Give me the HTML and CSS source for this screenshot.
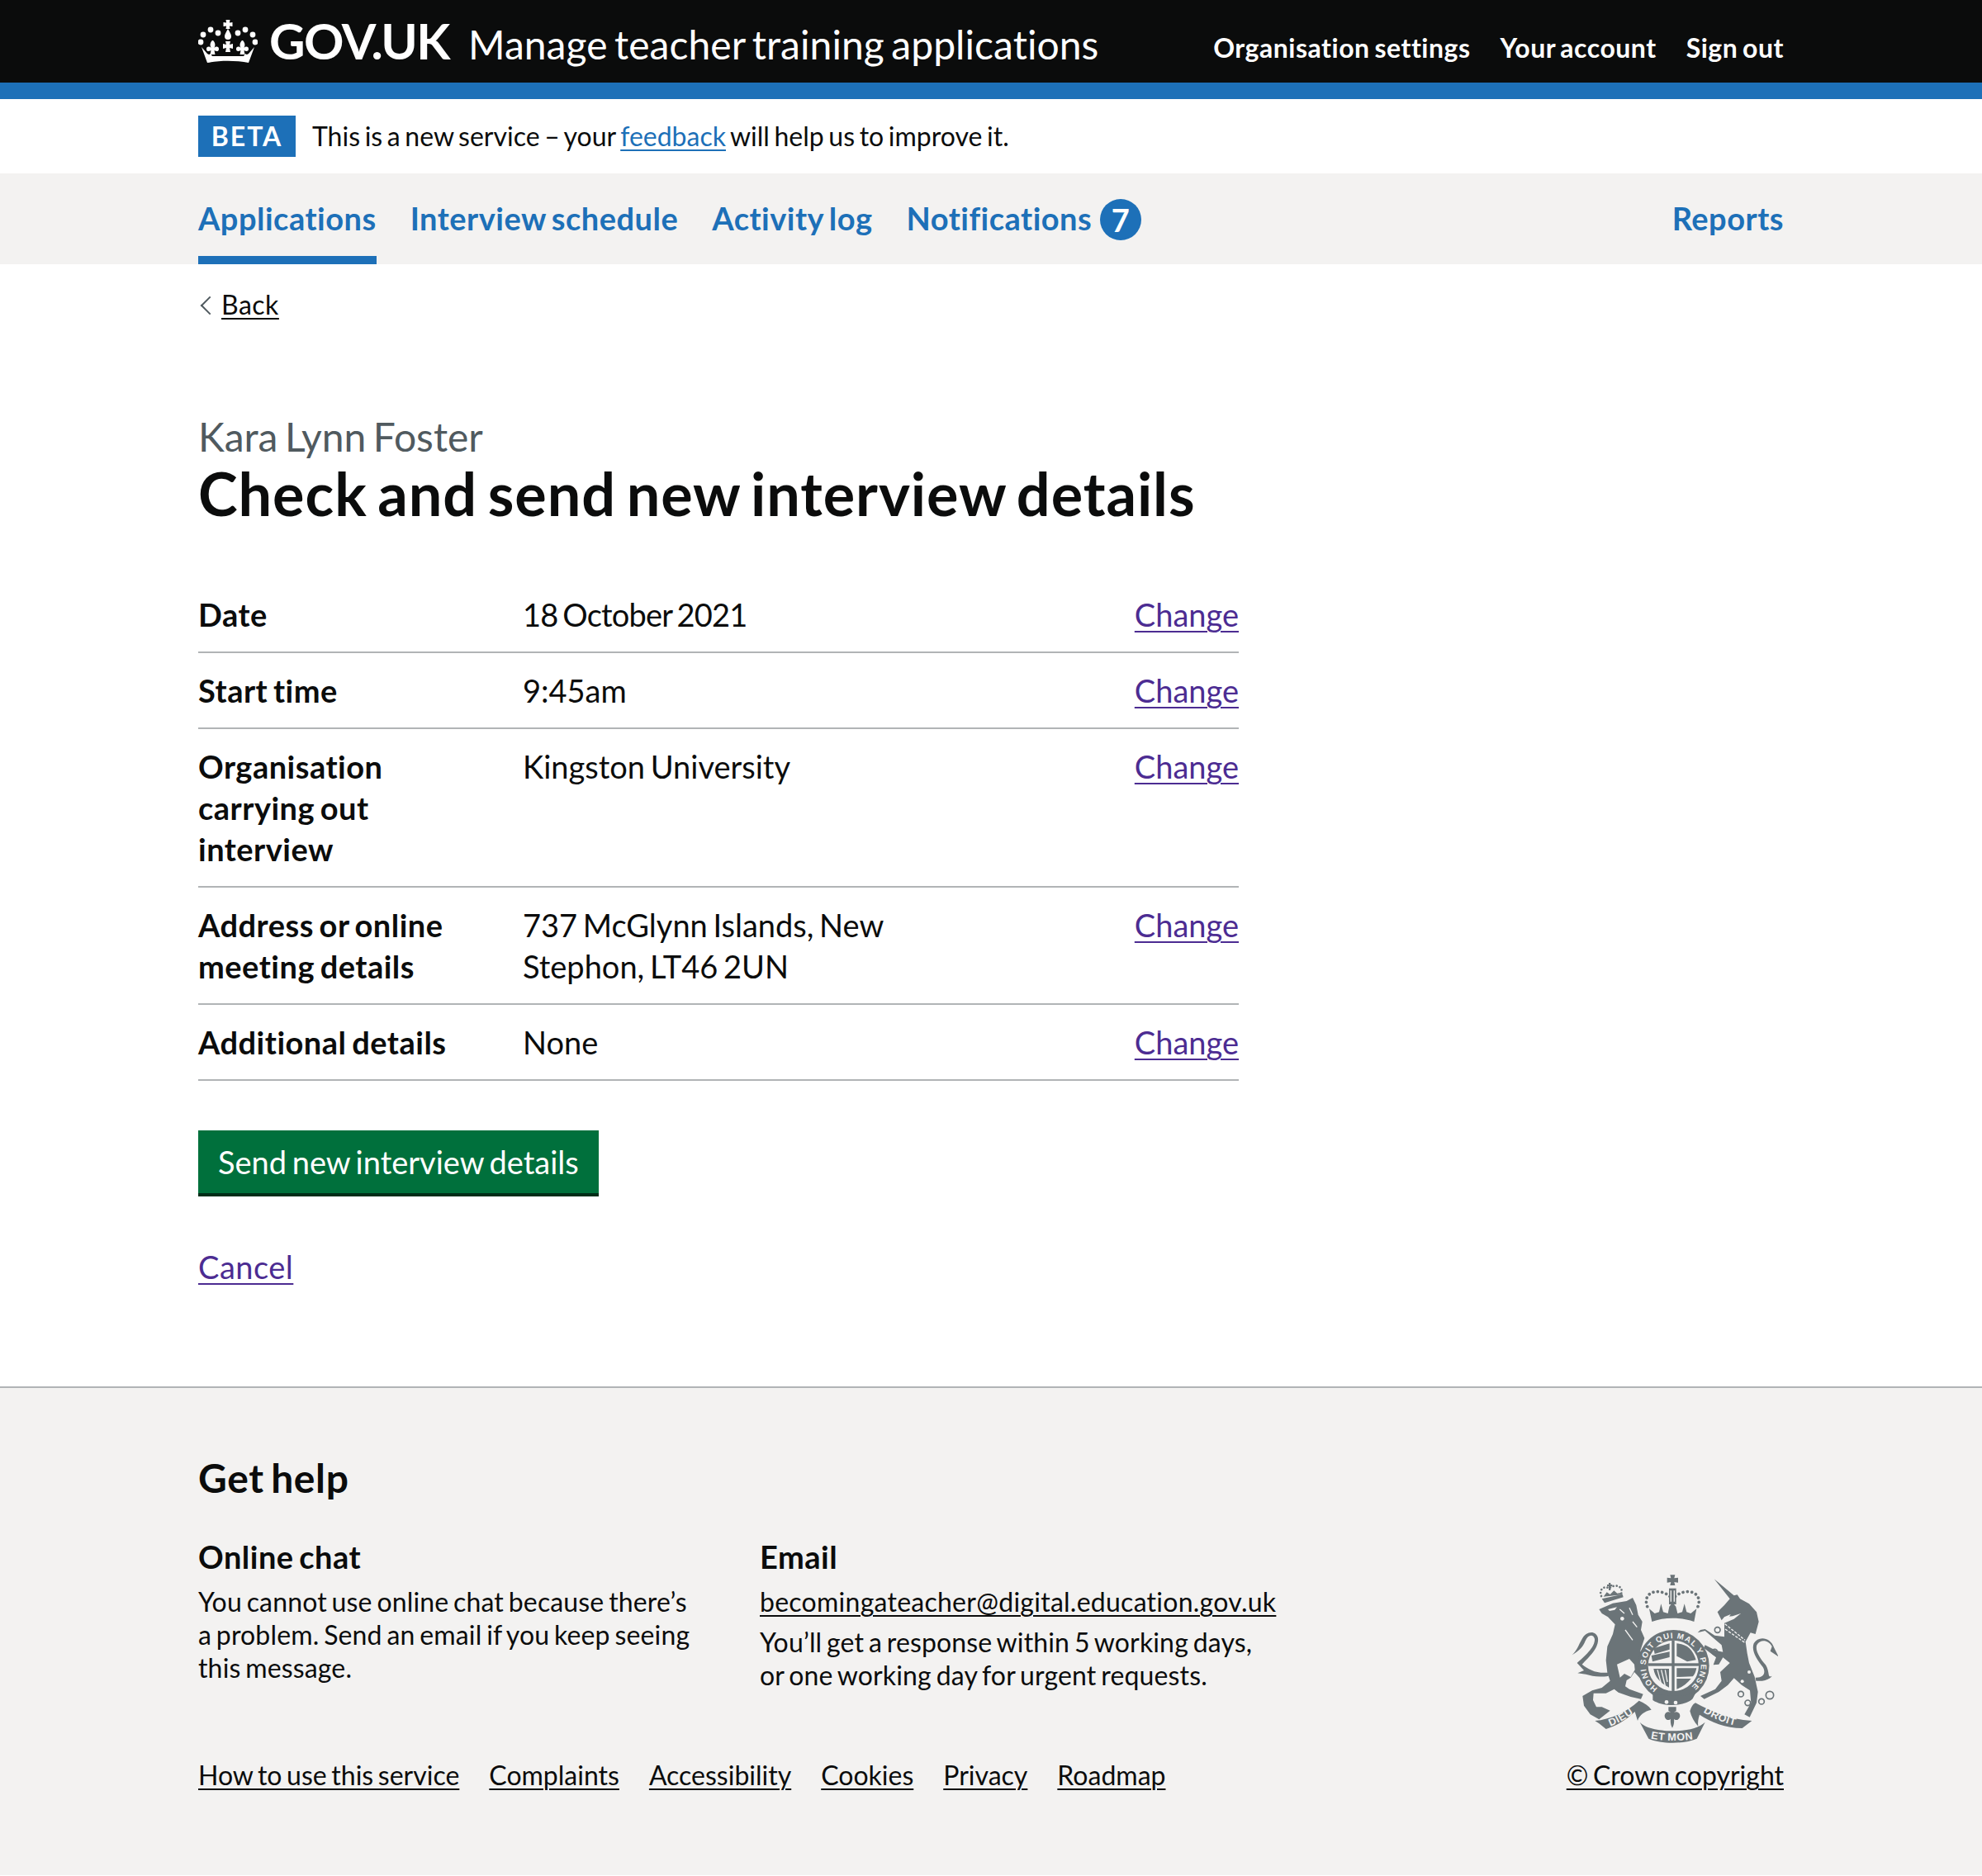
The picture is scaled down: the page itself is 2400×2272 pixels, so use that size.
FILE: index.html
```html
<!DOCTYPE html>
<html>
<head>
  <title>Check and send new interview details</title>
  <link rel="stylesheet" href="styles.css">
</head>
<body>
  <header class="header">
    <div class="width-container header-inner">
      <div class="header-brand">
        <svg class="crown" viewBox="0 0 72 52" aria-hidden="true">
          <defs>
            <path id="fleur" d="M0-12c2 2 3.500 5 1.500 9 2-2 5-2 5.500 1 .3 2-1.500 3.500-3 3l-2.500-1 1 5h-6l1-5-2.500 1c-1.500.5-3.300-1-3-3 .5-3 3.500-3 5.500-1-2-4-.5-7 1.500-9z"/>
          </defs>
          <g fill="#fff">
            <path d="M33.500 0h5l-.6 3.500 3.600-.6v5.200l-3.600-.6.600 3.500h-5l.6-3.500-3.600.6V2.900l3.600.6z"/>
            <path d="M36 11c2 3.500 4 6.500 4 9a4 4 0 0 1-8 0c0-2.500 2-5.500 4-9z"/>
            <circle cx="24" cy="16" r="3.400"/><circle cx="48" cy="16" r="3.400"/>
            <circle cx="15" cy="12" r="3.400"/><circle cx="57" cy="12" r="3.400"/>
            <circle cx="6" cy="18" r="3.400"/><circle cx="66" cy="18" r="3.400"/>
            <circle cx="3" cy="27" r="3.400"/><circle cx="69" cy="27" r="3.400"/>
            <use href="#fleur" x="18" y="37"/>
            <use href="#fleur" x="54" y="37"/>
            <path d="M33 26h6l-1 4 4-1v6l-4-1 1 5h-6l1-5-4 1v-6l4 1z"/>
            <path d="M4 33l7 8c2 1.500 3 1 4 0l2 3h38l2-3c1 1 2 1.500 4 0l7-8-7 19c-15-3-35-3-50 0z"/>
          </g>
        </svg>
        <span class="govuk">GOV.UK</span>
        <span class="service-name">Manage teacher training applications</span>
      </div>
      <nav class="header-links">
        <a href="#">Organisation settings</a>
        <a href="#">Your account</a>
        <a href="#">Sign out</a>
      </nav>
    </div>
  </header>

  <div class="width-container phase-banner">
    <strong class="tag">BETA</strong>
    <span>This is a new service – your <a class="link-blue" href="#">feedback</a> will help us to improve it.</span>
  </div>

  <nav class="primary-nav">
    <div class="width-container primary-nav-inner">
      <a class="nav-item nav-current" href="#">Applications</a>
      <a class="nav-item" href="#">Interview schedule</a>
      <a class="nav-item" href="#">Activity log</a>
      <a class="nav-item" href="#">Notifications <span class="count">7</span></a>
      <a class="nav-item nav-right" href="#">Reports</a>
    </div>
  </nav>

  <main class="width-container">
    <a class="back-link" href="#">Back</a>
    <span class="caption">Kara Lynn Foster</span>
    <h1 class="heading">Check and send new interview details</h1>

    <dl class="summary">
      <div class="summary-row">
        <dt>Date</dt>
        <dd class="summary-date">18 October 2021</dd>
        <dd class="summary-action"><a class="link-visited" href="#">Change</a></dd>
      </div>
      <div class="summary-row">
        <dt>Start time</dt>
        <dd>9:45am</dd>
        <dd class="summary-action"><a class="link-visited" href="#">Change</a></dd>
      </div>
      <div class="summary-row">
        <dt>Organisation carrying out interview</dt>
        <dd>Kingston University</dd>
        <dd class="summary-action"><a class="link-visited" href="#">Change</a></dd>
      </div>
      <div class="summary-row">
        <dt>Address or online meeting details</dt>
        <dd>737 McGlynn Islands, New Stephon, LT46 2UN</dd>
        <dd class="summary-action"><a class="link-visited" href="#">Change</a></dd>
      </div>
      <div class="summary-row">
        <dt>Additional details</dt>
        <dd>None</dd>
        <dd class="summary-action"><a class="link-visited" href="#">Change</a></dd>
      </div>
    </dl>

    <button class="button">Send new interview details</button>
    <p class="cancel"><a class="link-visited" href="#">Cancel</a></p>
  </main>

  <footer class="footer">
    <div class="width-container footer-grid">
      <div class="footer-help">
        <h2 class="footer-heading">Get help</h2>
        <div class="footer-columns">
          <div class="footer-col">
            <h3>Online chat</h3>
            <p>You cannot use online chat because there’s a problem. Send an email if you keep seeing this message.</p>
          </div>
          <div class="footer-col">
            <h3>Email</h3>
            <p class="footer-email"><a href="#">becomingateacher@digital.education.gov.uk</a></p>
            <p>You’ll get a response within 5 working days, or one working day for urgent requests.</p>
          </div>
        </div>
      </div>

      <svg class="crest" viewBox="70 55 750 610" aria-hidden="true">
        <defs>
          <path id="garter-arc" d="M382.600 466.900A100 100 0 1 1 497.400 466.900"/>
          <path id="ribbon-left" d="M208 606C250 590 285 568 318 540"/>
          <path id="ribbon-mid" d="M352 648C400 660 480 660 528 648"/>
          <path id="ribbon-right" d="M545 552C590 580 630 596 682 606"/>
        </defs>

        <!-- lion, in the coordinates of its left half -->
        <g transform="translate(30 30)">
          <g class="crest-ink">
            <path d="M140 150L190 128 240 120 262 108 275 135 282 170 297 195 292 225 305 255 290 300 305 350 312 385 290 402 268 378 255 398 240 408 235 430 250 440 300 458 292 476 255 468 210 452 195 440 165 455 120 455 118 480 130 505 150 505 180 518 140 550 108 532 85 500 80 465 115 445 150 435 180 410 170 380 165 335 170 285 190 240 198 205 172 178 150 165z"/>
            <path d="M42 316C60 300 65 280 78 258 92 228 130 225 136 255 140 290 105 322 78 350 100 368 130 384 172 380L175 392C135 398 115 392 92 386L62 382 85 372 60 345C85 322 125 290 124 258 120 240 100 240 90 265 82 285 70 300 42 316z"/>
            <path d="M150 112L225 95 228 106 160 127z"/>
            <path d="M156 104L168 88 180 96 194 82 206 92 220 90 222 97z"/>
            <path d="M175 54h7v6h6v7h-6v14h-7V67h-6v-7h6z"/>
          </g>
          <path class="crest-beads-small" d="M148 102C138 78 160 62 176 74 195 58 228 62 221 92"/>
          <g class="crest-paper">
            <path d="M205 350L250 330 268 350 270 370 255 396 232 384 216 398z"/>
            <path d="M172 150L205 142 197 152 178 156z"/>
            <circle cx="224" cy="184" r="7"/>
          </g>
          <path class="crest-cut" d="M215 150L232 165M250 145L262 170M262 195L278 215M235 225L262 262"/>
        </g>

        <!-- unicorn, in the coordinates of its right half -->
        <g transform="translate(420 30)">
          <g class="crest-ink">
            <path d="M168 40L240 100 252 97 262 112 295 130 322 160 330 195 318 240 300 235 282 268 288 310 295 345 315 395 327 450 322 490 297 542 278 532 302 490 298 445 268 425 240 400 218 425 185 450 132 476 118 465 172 440 195 410 190 378 225 345 200 325 185 350 165 352 175 325 130 290 135 280 175 300 200 305 195 280 160 250 135 228 108 235 118 225 135 222 170 245 205 250 205 200 240 185 265 165 235 175 205 178 195 190 180 160 205 135 225 112z"/>
            <path d="M318 398C345 400 358 382 345 360 322 330 302 300 312 274 328 246 372 250 386 290L402 322 372 302 378 285C365 260 335 258 323 280 316 300 335 328 355 352 372 380 360 402 378 392 365 410 340 412 320 410z"/>
          </g>
          <g class="crest-ring">
            <circle cx="265" cy="458" r="10"/>
            <circle cx="290" cy="490" r="10"/>
            <circle cx="340" cy="485" r="10"/>
            <circle cx="370" cy="462" r="14"/>
            <circle cx="180" cy="225" r="10"/>
            <circle cx="170" cy="305" r="10"/>
          </g>
          <g class="crest-paper">
            <circle cx="305" cy="332" r="8"/>
            <circle cx="295" cy="378" r="6"/>
            <circle cx="270" cy="412" r="6"/>
            <path d="M205 178L228 168 222 178 208 183z"/>
          </g>
          <path class="crest-cut crest-collar" d="M207 203L280 262M208 222L278 270"/>
        </g>

        <g class="crest-ink">
          <!-- crown over the shield -->
          <path d="M428 55h18l-3 12 14-2v18l-14-2 3 12h-18l3-12-14 2V65l14 2z"/>
          <path d="M424 104h26v58h-26z"/>
          <path d="M352 178L372 195 388 190 395 160 403 190 420 195 425 170 437 155 449 170 455 195 472 190 480 160 488 190 503 195 524 178 515 225C470 208 405 208 362 225z"/>
          <!-- garter, buckle strap -->
          <circle cx="440" cy="385" r="130"/>
          <path d="M365 490L480 495 524 478 510 505C480 535 400 535 365 510z"/>
          <!-- ribbons -->
          <path d="M155 585C210 580 270 555 315 512 335 520 350 530 360 545 335 550 315 565 310 585L300 552C265 585 230 605 195 615L170 595z"/>
          <path d="M318 590C340 615 400 622 440 622 490 622 535 610 555 590L525 650C480 670 395 670 350 650z"/>
          <path d="M520 520C575 550 640 580 725 585L690 612C630 612 575 590 535 563 530 578 528 590 530 605 515 590 505 570 500 550 505 535 510 525 520 520z"/>
          <!-- fleur under the shield -->
          <path d="M422 535h28v14l-8 5c20-8 30 16 14 27-6 3-12 0-14-3 2 14-2 26-6 33-4-7-8-19-6-33-2 3-8 6-14 3-16-11-6-35 14-27l-8-5z"/>
        </g>
        <path class="crest-beads" d="M345 170C325 115 390 100 428 134M529 170C549 115 484 100 446 134"/>
        <path class="crest-cut" d="M431 112v40M443 112v40"/>

        <g class="crest-paper">
          <circle cx="440" cy="385" r="92"/>
          <circle cx="415" cy="517" r="7"/>
          <circle cx="448" cy="519" r="7"/>
        </g>
        <text class="crest-text crest-garter"><textPath href="#garter-arc" textLength="495">HONI SOIT QUI MAL Y PENSE</textPath></text>

        <!-- quarters of the shield -->
        <g class="crest-ink">
          <rect x="434" y="293" width="10" height="184"/>
          <rect x="348" y="376" width="184" height="10"/>
          <path d="M368 322L426 304V326L372 342zM360 348L426 334V354L364 370zM452 304C490 306 510 326 522 364L490 370 452 350zM452 394H524C520 412 515 420 510 424L452 426zM452 432H504C490 450 470 464 452 470z"/>
          <path d="M368 396H424V464C396 450 372 428 368 396z"/>
        </g>
        <path class="crest-cut" d="M382 400L396 452M396 400L410 458M410 400L418 444"/>

        <text class="crest-text crest-motto"><textPath href="#ribbon-left" startOffset="2%">DIEU</textPath></text>
        <text class="crest-text crest-motto"><textPath href="#ribbon-mid" startOffset="3%">ET MON</textPath></text>
        <text class="crest-text crest-motto"><textPath href="#ribbon-right" startOffset="2%">DROIT</textPath></text>
      </svg>

      <ul class="footer-links">
        <li><a href="#">How to use this service</a></li>
        <li><a href="#">Complaints</a></li>
        <li><a href="#">Accessibility</a></li>
        <li><a href="#">Cookies</a></li>
        <li><a href="#">Privacy</a></li>
        <li><a href="#">Roadmap</a></li>
      </ul>
      <a class="copyright" href="#">© Crown copyright</a>
    </div>
  </footer>
</body>
</html>
```

FILE: styles.css
```css
html, body {
  margin: 0;
  padding: 0;
}

body {
  font-family: Lato, sans-serif;
  font-size: 38px;
  line-height: 50px;
  color: #0b0c0c;
  background: #fff;
  font-variant-ligatures: none;
}

/* the word gaps of Lato are wider than the ones in the reference */
body, body * {
  word-spacing: -0.08em;
}

a {
  color: inherit;
  text-underline-offset: 0.13em;
  text-decoration-thickness: 2px;
}

.width-container {
  width: 1920px;
  margin: 0 auto;
}

/* header */
.header {
  background: #0b0c0c;
  border-bottom: 20px solid #1d70b8;
  color: #fff;
  height: 100px;
}

.header-inner {
  display: flex;
  justify-content: space-between;
  height: 100px;
}

.header-brand {
  display: flex;
  align-items: baseline;
  height: 100px;
}

.crown {
  width: 72px;
  height: 52px;
  margin-right: 14px;
  align-self: center;
}

.govuk {
  font-size: 60px;
  font-weight: 700;
  line-height: 98px;
  letter-spacing: -1.5px;
  margin-right: 23px;
}

.service-name {
  font-size: 48px;
  line-height: 98px;
  letter-spacing: 0.05px;
}

.header-links {
  display: flex;
  gap: 36px;
  font-size: 32px;
  font-weight: 700;
  line-height: 116px;
  letter-spacing: 0.0165em;
}

.header-links a {
  text-decoration: none;
}

/* phase banner */
.phase-banner {
  display: flex;
  align-items: center;
  height: 90px;
  font-size: 32px;
  gap: 20px;
}

.tag {
  background: #1d70b8;
  color: #fff;
  height: 50px;
  width: 118px;
  line-height: 50px;
  text-align: center;
  letter-spacing: 2px;
  font-size: 32px;
}

.link-blue {
  color: #1d70b8;
}

/* primary navigation */
.primary-nav {
  background: #f3f2f1;
  height: 110px;
}

.primary-nav-inner {
  display: flex;
  gap: 41px;
  height: 110px;
}

.nav-item {
  color: #1d70b8;
  font-weight: 700;
  letter-spacing: 0.013em;
  text-decoration: none;
  box-sizing: border-box;
  height: 110px;
  padding-top: 29px;
}

.nav-current {
  border-bottom: 10px solid #1d70b8;
}

.nav-right {
  margin-left: auto;
}

.count {
  display: inline-block;
  width: 50px;
  height: 50px;
  margin-left: 3px;
  line-height: 50px;
  border-radius: 50%;
  background: #1d70b8;
  color: #fff;
  text-align: center;
  vertical-align: -2px;
}

/* page */
.back-link {
  display: block;
  font-size: 32px;
  line-height: 40px;
  letter-spacing: 0.5px;
  margin-top: 29px;
  padding-left: 28px;
  position: relative;
}

.back-link::before {
  content: "";
  position: absolute;
  left: 6px;
  top: 13px;
  width: 14px;
  height: 14px;
  border-left: 2px solid #505a5f;
  border-bottom: 2px solid #505a5f;
  transform: rotate(45deg);
}

.caption {
  display: block;
  color: #505a5f;
  font-size: 48px;
  line-height: 60px;
  margin-top: 110px;
}

.heading {
  font-size: 72px;
  line-height: 76px;
  font-weight: 700;
  letter-spacing: 0.013em;
  margin: 0 0 64px;
}

.summary {
  width: 1260px;
  margin: 0 0 60px;
}

.summary-row {
  display: flex;
  border-bottom: 2px solid #b1b4b6;
  padding: 20px 0;
}

.summary-row dt {
  box-sizing: border-box;
  width: 393px;
  padding-right: 35px;
  font-weight: 700;
  letter-spacing: 0.013em;
}

.summary-row dd {
  margin: 0;
  width: 480px;
}

.summary-row .summary-date {
  letter-spacing: -0.8px;
}

.summary-row .summary-action {
  width: auto;
  margin-left: auto;
}

.link-visited {
  color: #4c2c92;
}

.button {
  display: block;
  font-family: inherit;
  font-size: 38px;
  line-height: 50px;
  height: 80px;
  padding: 0 24px;
  color: #fff;
  background: #00703c;
  border: 0;
  border-bottom: 4px solid #002d18;
}

.cancel {
  margin: 60px 0 120px;
  letter-spacing: 0.5px;
}

/* footer */
.footer {
  background: #f3f2f1;
  border-top: 2px solid #b1b4b6;
  box-sizing: border-box;
  height: 592px;
  font-size: 32px;
  line-height: 40px;
}

.footer-grid {
  display: grid;
  grid-template-columns: 1fr auto;
  row-gap: 19px;
  padding-top: 79px;
}

.footer-heading {
  font-size: 48px;
  line-height: 60px;
  font-weight: 700;
  letter-spacing: 0.013em;
  margin: 0 0 40px;
}

.footer-columns {
  display: flex;
  gap: 80px;
}

.footer-col {
  width: 600px;
}

.footer-col h3 {
  font-size: 38px;
  line-height: 50px;
  letter-spacing: 0.013em;
  margin: 0 0 10px;
}

.footer-col p {
  margin: 0;
  letter-spacing: 0.15px;
}

.footer-col .footer-email {
  margin-bottom: 9px;
  letter-spacing: 0.26px;
  white-space: nowrap;
}

.crest {
  width: 250px;
  height: 204px;
  margin: 147px 7px 0 0;
  justify-self: end;
}

.crest-ink {
  fill: #6b7478;
}

.crest-paper {
  fill: #f3f2f1;
}

.crest-ring {
  fill: none;
  stroke: #6b7478;
  stroke-width: 5;
}

.crest-cut {
  fill: none;
  stroke: #f3f2f1;
  stroke-width: 4;
}

.crest-collar {
  stroke-dasharray: 10 5;
}

.crest-beads,
.crest-beads-small {
  fill: none;
  stroke: #6b7478;
  stroke-linecap: round;
}

.crest-beads {
  stroke-width: 11;
  stroke-dasharray: 0.1 16;
}

.crest-beads-small {
  stroke-width: 8;
  stroke-dasharray: 0.1 12;
}

.crest-text {
  font-family: "Liberation Sans", sans-serif;
  font-weight: 700;
  fill: #f3f2f1;
  word-spacing: 0;
}

.crest-garter {
  font-size: 29px;
}

.crest-motto {
  font-size: 38px;
  letter-spacing: 2px;
}

.footer-links {
  display: flex;
  gap: 36px;
  list-style: none;
  margin: 0;
  padding: 0;
}
```
